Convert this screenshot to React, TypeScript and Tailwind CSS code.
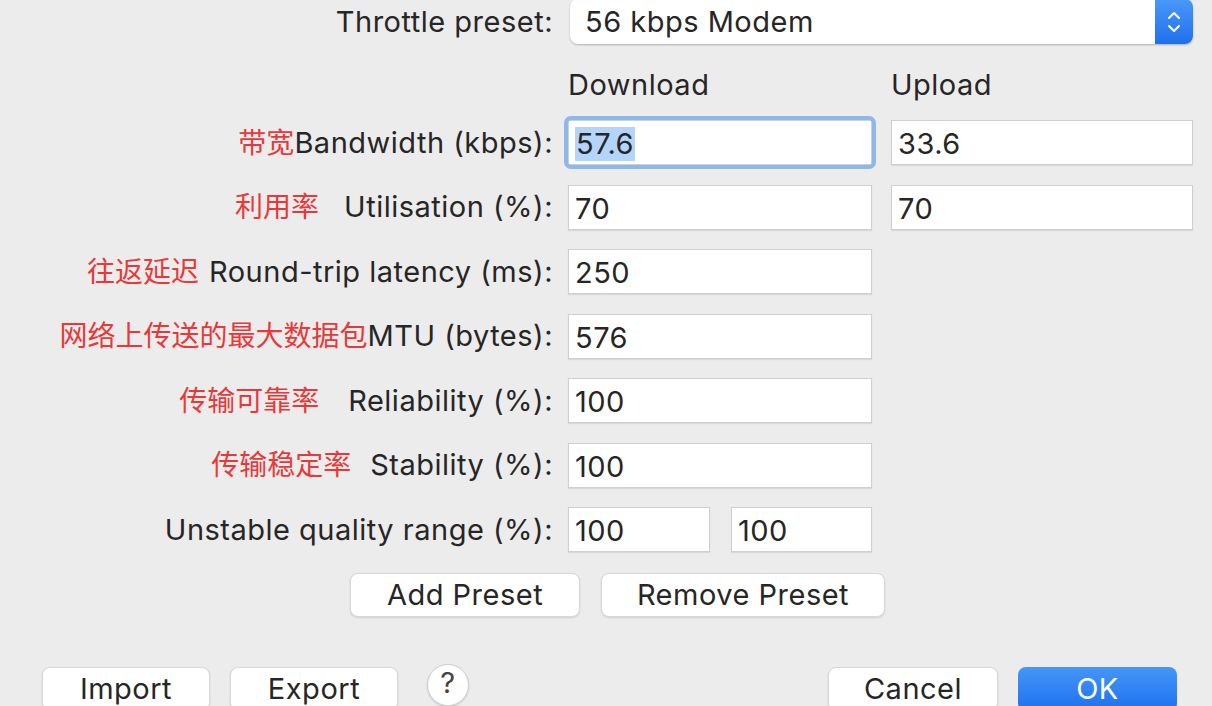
import React from 'react';

const FONT = "font-['Inter','Noto_Sans_CJK_SC',sans-serif]";

const Field = ({ value, w, focused }: { value: string; w: string; focused?: boolean }) => (
  <div className={`relative h-[45px] ${w}`}>
    {focused && (
      <div className="absolute -inset-[4px] rounded-[7px] border-[4px] border-[#8cb8ec]" />
    )}
    <div className="h-full w-full bg-white border border-[#cfcfcf] shadow-[0_1px_1px_rgba(0,0,0,0.08)] flex items-center pl-[6px] pt-[3px]">
      <span className={focused ? 'bg-[#b4d5fb] px-[1px] leading-[34px]' : ''}>{value}</span>
    </div>
  </div>
);

const Label = ({ cn, gap, en }: { cn?: string; gap?: string; en: string }) => (
  <div className="w-[553px] flex justify-end items-center">
    {cn && <span className={`text-[#e8393a] text-[28px] tracking-normal ${gap ?? ''}`}>{cn}</span>}
    <span>{en}</span>
  </div>
);

const Btn = ({ children, w, primary }: { children: React.ReactNode; w: string; primary?: boolean }) => (
  <div
    className={`h-[44px] ${w} rounded-[8px] flex items-center justify-center ${
      primary
        ? 'bg-gradient-to-b from-[#4596f8] to-[#1e70ef] text-white'
        : 'bg-white border border-[#d8d8d8] shadow-[0_1px_2px_rgba(0,0,0,0.12)]'
    }`}
  >
    {children}
  </div>
);

const rows = [
  { cn: '往返延迟', gap: 'mr-[10px]', en: 'Round-trip latency (ms):', v: '250' },
  { cn: '网络上传送的最大数据包', en: 'MTU (bytes):', v: '576' },
  { cn: '传输可靠率', gap: 'mr-[29px]', en: 'Reliability (%):', v: '100' },
  { cn: '传输稳定率', gap: 'mr-[19px]', en: 'Stability (%):', v: '100' },
];

export default function App() {
  return (
    <div className={`w-[1212px] h-[706px] overflow-hidden bg-[#ececec] text-[#262626] text-[29px] tracking-[0.5px] ${FONT}`}>
      {/* preset */}
      <div className="flex items-center h-[45px] -mt-[1px]">
        <div className="w-[553px] flex justify-end">Throttle preset:</div>
        <div className="ml-[17px] w-[623px] h-[45px] flex bg-white rounded-[8px] shadow-[0_1px_2px_rgba(0,0,0,0.25)]">
          <div className="flex-1 flex items-center pl-[15px]">56 kbps Modem</div>
          <div className="w-[38px] rounded-r-[8px] bg-gradient-to-b from-[#4a98f7] to-[#1f6fee] flex items-center justify-center">
            <svg width="18" height="30" viewBox="0 0 18 30" fill="none" stroke="white" strokeWidth="2" strokeLinecap="round" strokeLinejoin="round">
              <path d="M4 11 L9 6 L14 11" />
              <path d="M4 19 L9 24 L14 19" />
            </svg>
          </div>
        </div>
      </div>

      {/* column headers */}
      <div className="flex h-[40px] mt-[21px] items-center">
        <div className="w-[568px]" />
        <div className="w-[323px]">Download</div>
        <div>Upload</div>
      </div>

      <div className="mt-[15px] flex flex-col gap-[19.5px]">
        <div className="flex items-center">
          <Label cn="带宽" en="Bandwidth (kbps):" />
          <div className="ml-[15px] flex gap-[19px]">
            <Field value="57.6" w="w-[304px]" focused />
            <Field value="33.6" w="w-[302px]" />
          </div>
        </div>
        <div className="flex items-center">
          <Label cn="利用率" gap="mr-[25px]" en="Utilisation (%):" />
          <div className="ml-[15px] flex gap-[19px]">
            <Field value="70" w="w-[304px]" />
            <Field value="70" w="w-[302px]" />
          </div>
        </div>
        {rows.map(r => (
          <div key={r.en} className="flex items-center">
            <Label cn={r.cn} gap={r.gap} en={r.en} />
            <div className="ml-[15px]">
              <Field value={r.v} w="w-[304px]" />
            </div>
          </div>
        ))}
        <div className="flex items-center">
          <Label en="Unstable quality range (%):" />
          <div className="ml-[15px] flex gap-[21px]">
            <Field value="100" w="w-[142px]" />
            <Field value="100" w="w-[141px]" />
          </div>
        </div>
      </div>

      <div className="mt-[21px] flex gap-[21px] pl-[350px]">
        <Btn w="w-[230px]">Add Preset</Btn>
        <Btn w="w-[284px]">Remove Preset</Btn>
      </div>

      <div className="mt-[50px] flex items-start px-[42px]">
        <Btn w="w-[168px]">Import</Btn>
        <div className="ml-[20px]"><Btn w="w-[168px]">Export</Btn></div>
        <div className="ml-[29px] -mt-[3px] w-[42px] h-[42px] rounded-full bg-white border border-[#d0d0d0] shadow-[0_1px_2px_rgba(0,0,0,0.15)] flex items-center justify-center text-[29px] text-[#444] pb-[4px]">?</div>
        <div className="flex-1" />
        <Btn w="w-[170px]">Cancel</Btn>
        <div className="ml-[20px] mr-[-7px]"><Btn w="w-[159px]" primary>OK</Btn></div>
      </div>
    </div>
  );
}
